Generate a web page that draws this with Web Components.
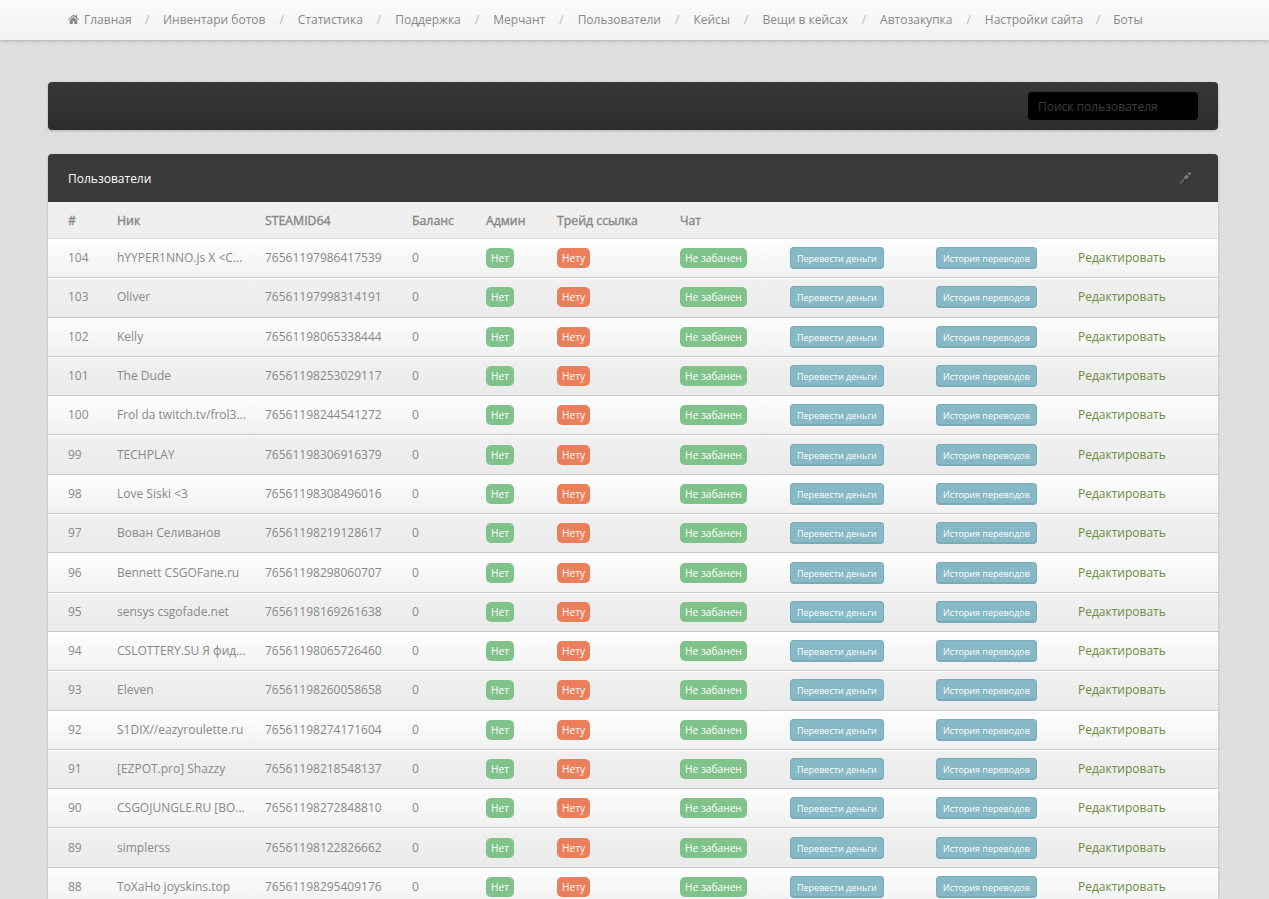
<!DOCTYPE html>
<html lang="ru">
<head>
<meta charset="utf-8">
<title>Пользователи</title>
<style>
  html, body { margin: 0; padding: 0; }
  body {
    height: 899px;
    overflow: hidden;
    font-family: "Open Sans", "Liberation Sans", sans-serif;
    font-size: 13px;
    color: #777;
    background-color: #dedede;
    background-image:
      radial-gradient(circle at 4px 4px, #dedede 0 2px, #e3e3e3 2.3px 3px, transparent 3.3px),
      radial-gradient(circle at 4px 4px, #dedede 0 2px, #e3e3e3 2.3px 3px, transparent 3.3px);
    background-size: 16px 16px;
    background-position: 0 0, 8px 8px;
  }
</style>
</head>
<body>
<admin-nav></admin-nav>
<admin-page>
  <search-bar></search-bar>
  <users-panel id="users"></users-panel>
</admin-page>

<script>
class AdminNav extends HTMLElement {
  connectedCallback() {
    const items = ['Главная','Инвентари ботов','Статистика','Поддержка','Мерчант','Пользователи','Кейсы','Вещи в кейсах','Автозакупка','Настройки сайта','Боты'];
    this.attachShadow({ mode: 'open' });
    this.shadowRoot.innerHTML = `
      <style>
        :host {
          display: flex;
          align-items: center;
          box-sizing: border-box;
          height: 40px;
          padding: 0 0 2px 68px;
          background: linear-gradient(#fafafa, #f3f3f3);
          box-shadow: 0 1px 4px rgba(0,0,0,.22);
          font-size: 12px;
          color: #888;
          white-space: nowrap;
        }
        svg { width: 11px; height: 10px; margin-right: 5px; fill: #888; }
        .sep { color: #bbb; width: 32.4px; text-align: center; }
        .sep.first { width: 31.4px; }
        .sep.tight { width: 30px; }
      </style>
      <svg viewBox="0 0 22 20"><path d="M11 1 0 10.5l1.4 1.6L11 4l9.600 8.100 1.400-1.600-4-3.400V2h-3v2.600zM3.500 12.500V20h6v-5.500h3V20h6v-7.500L11 6z"/></svg>
      ${items.map((t, i) => `<span>${t}</span>${i < items.length - 1 ? `<span class="sep${i === 0 ? ' first' : i === 9 ? ' tight' : ''}">/</span>` : ''}`).join('')}
    `;
  }
}

class AdminPage extends HTMLElement {
  connectedCallback() {
    this.attachShadow({ mode: 'open' });
    this.shadowRoot.innerHTML = `
      <style>
        :host {
          display: flex;
          flex-direction: column;
          gap: 24px;
          padding: 42px 51px 0 48px;
        }
      </style>
      <slot></slot>
    `;
  }
}

class SearchBar extends HTMLElement {
  connectedCallback() {
    this.attachShadow({ mode: 'open' });
    this.shadowRoot.innerHTML = `
      <style>
        :host {
          display: flex;
          justify-content: flex-end;
          align-items: center;
          height: 48px;
          padding-right: 20px;
          border-radius: 4px;
          background: linear-gradient(#363636, #2d2d2d);
          box-shadow: 0 1px 3px rgba(0,0,0,.2);
        }
        input {
          box-sizing: border-box;
          width: 170px;
          height: 28px;
          padding: 0 10px;
          border: 0;
          border-radius: 4px;
          background: #000;
          color: #444;
          font: 12px "Open Sans", "Liberation Sans", sans-serif;
          outline: none;
        }
        input::placeholder { color: #3f3f3f; opacity: 1; }
      </style>
      <input placeholder="Поиск пользователя">
    `;
  }
}

class UsersPanel extends HTMLElement {
  set users(list) {
    this.shadowRoot.querySelector('.rows').innerHTML =
      list.map(([id, nick, steam]) => `<div class="row"><span>${id}</span><span class="nick">${nick}</span><span>${steam}</span><span>0</span><span><b class="tag green">Нет</b></span><span><b class="tag red">Нету</b></span><span><b class="tag green">Не забанен</b></span><span><a class="btn">Перевести деньги</a></span><span><a class="btn">История переводов</a></span><span class="edit">Редактировать</span></div>`).join('');
  }
  constructor() {
    super();
    this.attachShadow({ mode: 'open' });
    this.shadowRoot.innerHTML = `
      <style>
        :host {
          display: block;
          border-radius: 4px 4px 0 0;
          overflow: hidden;
          box-shadow: 0 1px 3px rgba(0,0,0,.2);
        }
        .title {
          display: flex;
          justify-content: space-between;
          align-items: center;
          height: 48px;
          padding: 0 26px 0 20px;
          background: #3a3a3a;
          color: #fff;
          font-size: 12px;
        }
        .title svg { width: 14px; height: 14px; }
        .head, .row {
          display: grid;
          grid-template-columns: 49px 148px 147px 74px 71px 123px 110px 146px 142px 1fr;
          padding-left: 20px;
          align-items: center;
        }
        .head {
          box-sizing: border-box;
          height: 37px;
          background: #efefef;
          border-bottom: 1px solid #ddd;
          color: #888;
          font-size: 12.3px;
          -webkit-text-stroke: .4px #888;
        }
        .row {
          box-sizing: border-box;
          height: 39.3px;
          padding-bottom: 2px;
          border-bottom: 1px solid #c8c8c8;
          border-top: 1px solid #fff;
          background: linear-gradient(#fdfdfd, #f1f1f1);
          font-size: 12px;
          color: #888;
          white-space: nowrap;
        }
        .row:nth-child(even) { background: linear-gradient(#f0f0f0, #ebebeb); }
        .nick { overflow: hidden; }
        .tag {
          display: inline-block;
          padding: 0 5px;
          height: 20px;
          line-height: 20px;
          margin-top: 1px;
          border-radius: 5px;
          color: #fff;
          font-size: 10.2px;
          font-weight: 400;
        }
        .green { background: #7fc28a; }
        .red { background: #ec7f5b; }
        .btn {
          display: inline-block;
          box-sizing: border-box;
          padding: 0 6px;
          height: 22px;
          line-height: 21px;
          margin-top: 1px;
          border: 1px solid #7aabb9;
          border-bottom: 2px solid #7aa9b7;
          border-radius: 4px;
          background: #86b8c6;
          color: #fff;
          font-size: 9px;
        }
        .edit { color: #6e8b3d; font-size: 12px; }
      </style>
      <div class="title">
        <span>Пользователи</span>
        <svg viewBox="0 0 14 14"><path d="M2 12.500 6 8.500" stroke="#707070" stroke-width="1.600" fill="none"/><path d="M5.500 6.500 9 3.500l2 2L8 9z" fill="#7c7c7c"/><path d="m10.500 1.500 2 2.200" stroke="#8e8e8e" stroke-width="1.800" fill="none"/><path d="M6.500 9.500l3-.8" stroke="#222" stroke-width="1" fill="none"/></svg>
      </div>
      <div class="head">
        <span>#</span><span>Ник</span><span>STEAMID64</span><span>Баланс</span><span>Админ</span><span>Трейд ссылка</span><span>Чат</span><span></span><span></span><span></span>
      </div>
      <div class="rows"></div>
    `;
  }
}

customElements.define('admin-nav', AdminNav);
customElements.define('admin-page', AdminPage);
customElements.define('search-bar', SearchBar);
customElements.define('users-panel', UsersPanel);

document.getElementById('users').users = [
  [104,'hYYPER1NNO.js X &lt;C...','76561197986417539'],
  [103,'Oliver','76561197998314191'],
  [102,'Kelly','76561198065338444'],
  [101,'The Dude','76561198253029117'],
  [100,'Frol da twitch.tv/frol3...','76561198244541272'],
  [99,'TECHPLAY','76561198306916379'],
  [98,'Love Siski &lt;3','76561198308496016'],
  [97,'Вован Селиванов','76561198219128617'],
  [96,'Bennett CSGOFane.ru','76561198298060707'],
  [95,'sensys csgofade.net','76561198169261638'],
  [94,'CSLOTTERY.SU Я фид...','76561198065726460'],
  [93,'Eleven','76561198260058658'],
  [92,'S1DIX//eazyroulette.ru','76561198274171604'],
  [91,'[EZPOT.pro] Shazzy','76561198218548137'],
  [90,'CSGOJUNGLE.RU [BO...','76561198272848810'],
  [89,'simplerss','76561198122826662'],
  [88,'ToXaHo joyskins.top','76561198295409176']
];
</script>
</body>
</html>
